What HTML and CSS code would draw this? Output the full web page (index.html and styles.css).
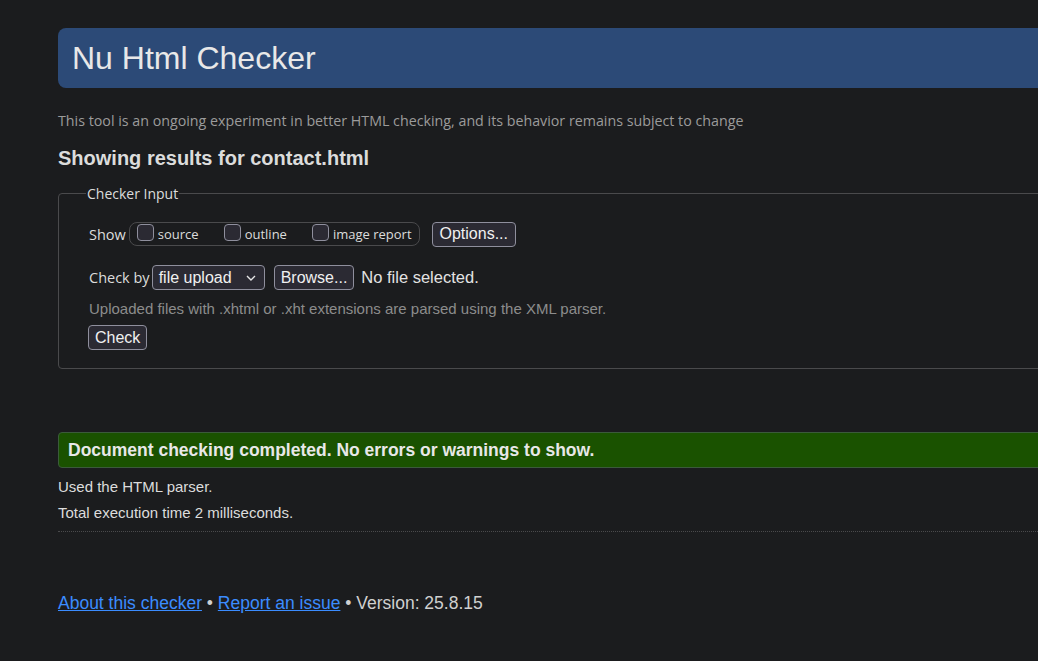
FILE: index.html
```html
<!DOCTYPE html>
<html lang="en">
<head>
<meta charset="utf-8">
<title>Nu Html Checker</title>
<link rel="stylesheet" href="styles.css">
</head>
<body>
<div class="page">
  <h1 class="title-bar">Nu Html Checker</h1>
  <p class="subtitle">This tool is an ongoing experiment in better HTML checking, and its behavior remains subject to change</p>
  <h2 class="results-heading">Showing results for contact.html</h2>

  <fieldset class="checker">
    <legend class="checker-legend">Checker Input</legend>
    <div class="row show-row">
      <span class="row-label">Show</span>
      <div class="option-group">
        <label class="check-item"><input type="checkbox" class="check-box"><span>source</span></label>
        <label class="check-item"><input type="checkbox" class="check-box"><span>outline</span></label>
        <label class="check-item"><input type="checkbox" class="check-box"><span>image report</span></label>
      </div>
      <button class="btn">Options...</button>
    </div>
    <div class="row checkby-row">
      <span class="row-label">Check by</span>
      <span class="select">file upload
        <svg class="chev" width="10" height="6" viewBox="0 0 10 6"><path d="M1 1 L5 5 L9 1" fill="none" stroke="#e6e6e6" stroke-width="1.4"/></svg>
      </span>
      <button class="btn">Browse...</button>
      <span class="no-file">No file selected.</span>
    </div>
    <p class="hint">Uploaded files with .xhtml or .xht extensions are parsed using the XML parser.</p>
    <button class="btn btn-check">Check</button>
  </fieldset>

  <div class="success">Document checking completed. No errors or warnings to show.</div>
  <p class="info info-first">Used the HTML parser.</p>
  <p class="info">Total execution time 2 milliseconds.</p>
  <hr class="dotted">

  <p class="footer"><a href="#">About this checker</a> • <a href="#">Report an issue</a> • Version: 25.8.15</p>
</div>
</body>
</html>
```
FILE: styles.css
```css
html, body {
  margin: 0;
  padding: 0;
  background: #1b1c1e;
  overflow: hidden;
}
body {
  color: #e3e3e3;
  font-family: "Liberation Sans", Arial, sans-serif;
}
.page {
  width: 1010px;
  margin-left: 58px;
  padding-top: 28px;
}
.title-bar {
  margin: 0;
  height: 60px;
  box-sizing: border-box;
  background: #2c4a77;
  border-radius: 8px 0 0 8px;
  font-weight: normal;
  font-size: 32px;
  line-height: 60px;
  padding-left: 14px;
  color: #e8e8e8;
}
.subtitle {
  margin: 24px 0 0;
  font-family: "Open Sans", sans-serif;
  font-size: 14.25px;
  line-height: 18px;
  color: #9b9b9b;
}
.results-heading {
  margin: 16px 0 0;
  font-size: 20px;
  line-height: 24px;
  font-weight: bold;
  color: #dcdcdc;
}
.checker {
  margin: 14px 0 0;
  border: 1px solid #4a4a4c;
  border-radius: 4px;
  padding: 18px 0 18px 30px;
}
.checker-legend {
  font-family: "Open Sans", sans-serif;
  font-size: 14px;
  color: #dcdcdc;
  padding: 0 1px;
  margin-left: -3px;
}
.row {
  display: flex;
  align-items: center;
}
.row-label {
  font-family: "Open Sans", sans-serif;
  font-size: 14.5px;
  color: #dcdcdc;
}
.show-row {
  height: 26px;
}
.option-group {
  display: flex;
  align-items: center;
  margin-left: 3px;
  height: 22px;
  border: 1px solid #4a4a4c;
  border-radius: 8px;
  padding: 0 7px 0 7px;
  gap: 25px;
}
.check-item {
  display: flex;
  align-items: center;
  font-family: "Open Sans", sans-serif;
  font-size: 13px;
  color: #dcdcdc;
}
.check-box {
  appearance: none;
  -webkit-appearance: none;
  width: 17px;
  height: 17px;
  margin: -4px 4px 0 0;
  background: #2b2a33;
  border: 1px solid #8f8f9d;
  border-radius: 4px;
  box-sizing: border-box;
}
.btn {
  font-family: "Liberation Sans", Arial, sans-serif;
  font-size: 16px;
  color: #f0f0f0;
  background: #2b2a33;
  border: 1px solid #8f8f9d;
  border-radius: 4px;
  height: 25px;
  padding: 0 6px;
  line-height: 22px;
}
.show-row .btn {
  margin-left: 12px;
  padding: 0 7px;
}
.checkby-row {
  margin-top: 18px;
  height: 25px;
}
.select {
  display: inline-flex;
  align-items: center;
  box-sizing: border-box;
  height: 25px;
  width: 113px;
  margin-left: 2px;
  padding: 0 6px;
  font-size: 16px;
  color: #f0f0f0;
  background: #2b2a33;
  border: 1px solid #8f8f9d;
  border-radius: 4px;
  justify-content: space-between;
}
.chev {
  margin-right: 2px;
}
.checkby-row .btn {
  margin-left: 9px;
}
.no-file {
  margin-left: 7px;
  font-size: 16.5px;
  color: #e3e3e3;
}
.hint {
  margin: 10px 0 0;
  font-size: 15px;
  line-height: 18px;
  color: #8c8c8c;
}
.btn-check {
  margin-top: 7px;
  margin-left: -1px;
}
.success {
  margin-top: 63px;
  height: 36px;
  box-sizing: border-box;
  background: #1a5200;
  border: 1px solid #3b5a3b;
  border-radius: 4px 0 0 4px;
  padding-left: 9px;
  font-size: 17.5px;
  font-weight: bold;
  line-height: 34px;
  color: #e8e8e8;
}
.info {
  margin: 9px 0 0;
  font-size: 15px;
  line-height: 17px;
  color: #dcdcdc;
}
.info-first {
  margin-top: 10px;
}
.dotted {
  margin: 10px 0 0;
  border: 0;
  border-top: 1px dotted #4a4a4c;
  height: 0;
}
.footer {
  margin: 61px 0 0;
  font-size: 17.5px;
  line-height: 20px;
  color: #d0d0d0;
}
.footer a {
  color: #3b8cff;
  text-decoration: underline;
}
```
